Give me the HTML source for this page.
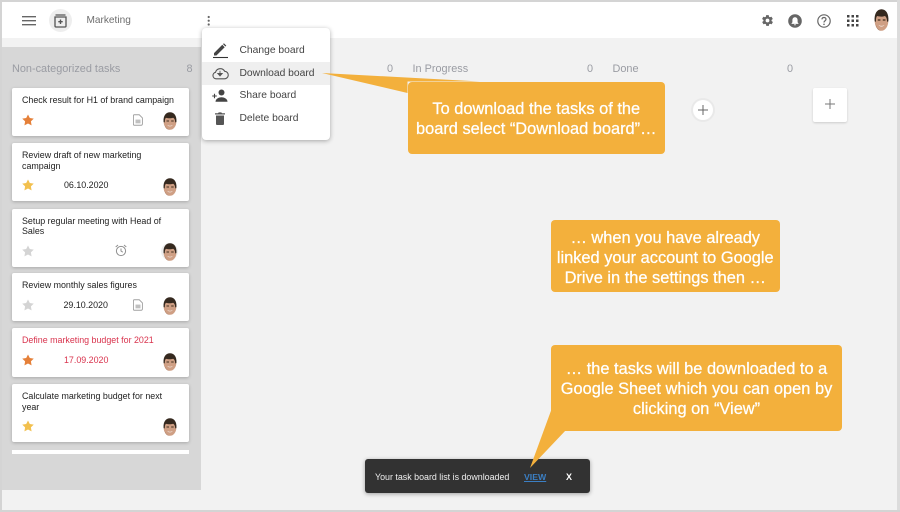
<!DOCTYPE html>
<html lang="en">
<head>
<meta charset="utf-8">
<title>Marketing board</title>
<style>
html,body{margin:0;padding:0}
body{width:900px;height:512px;position:relative;overflow:hidden;background:#f2f2f2;font-family:"Liberation Sans",sans-serif;color:#222}
.a{position:absolute;white-space:nowrap}
#frameT{left:0;top:0;width:900px;height:2px;background:#d4d4d4}
#frameL{left:0;top:0;width:2px;height:512px;background:#d4d4d4}
#frameR{left:897px;top:0;width:3px;height:512px;background:#dcdcdc}
#frameB{left:0;top:510px;width:900px;height:2px;background:#d4d4d4}
#hdr{left:2px;top:2px;width:895px;height:36px;background:#fff}
#col{left:2px;top:47px;width:199px;height:443px;background:#d7d7d7}
.card{position:absolute;left:12px;width:177px;background:#fff;border-radius:2px;box-shadow:0 1px 3px rgba(0,0,0,.22)}
.t{position:absolute;white-space:nowrap;font-size:8.9px;line-height:10.7px;color:#222}
.hd{position:absolute;white-space:nowrap;font-size:10.9px;color:#9a9ca3;line-height:12px}
.mi{position:absolute;white-space:nowrap;font-size:10.3px;color:#444;line-height:12px}
.co{position:absolute;background:#f3b03c;border-radius:4px;color:#fff;text-align:center;font-size:16.4px;line-height:20px;font-weight:400;-webkit-text-stroke:.25px #fff;white-space:nowrap}
#menu{left:202px;top:28px;width:128px;height:112px;background:#fff;border-radius:4px;box-shadow:0 1px 5px rgba(0,0,0,.32)}
#hl{left:202px;top:62px;width:128px;height:23px;background:#efefef}
#snack{left:365px;top:459px;width:225px;height:34px;background:#323232;border-radius:3px;box-shadow:0 1px 4px rgba(0,0,0,.35)}
svg{position:absolute;overflow:visible}
</style>
</head>
<body>
<svg width="0" height="0" style="position:absolute">
<defs>
<symbol id="av" viewBox="0 0 14 18" preserveAspectRatio="none">
<ellipse cx="7" cy="9.500" rx="6.400" ry="8.300" fill="#cf9f84"/>
<path d="M.6 10C0 3.500 3 .2 7 .2s7 3.300 6.400 9.800l-1.200.5C12.200 8 11.500 6.200 10 5.700 8 6.500 4.500 6.200 3 5.700 2 6.500 1.800 8 1.800 10.500z" fill="#35291f"/>
<path d="M3.500 9h2.500M8.200 9h2.500" stroke="#43301f" stroke-width="1"/>
<path d="M4.300 13c1.600 1.100 3.800 1.100 5.400 0-.5 1.700-4.900 1.700-5.400 0z" fill="#fff"/>
<path d="M1.500 12c1 4.300 3.300 5.500 5.500 5.700-2.800.3-5-1.600-5.500-5.700z" fill="#9b6d53"/>
</symbol>
<symbol id="star" viewBox="0 0 24 24">
<path d="M12 1l3.600 7L23.500 9.200l-5.700 5.600 1.400 8L12 19l-7.200 3.800 1.400-8L.5 9.200 8.400 8z"/>
</symbol>
<symbol id="doc" viewBox="0 0 12 14">
<path d="M1.500.7h6l3.800 3.800v7.300a1.500 1.500 0 0 1-1.500 1.500H1.500a1 1 0 0 1-1-1V1.700a1 1 0 0 1 1-1z" fill="none" stroke="#a0a0a0" stroke-width="1.100"/>
<path d="M3 6.500h6v4.500H3z" fill="#c0c0c0"/>
</symbol>
</defs>
</svg>

<div class="a" id="hdr"></div>
<div class="a" id="col"></div>

<!-- header left -->
<svg style="left:22px;top:16px" width="14" height="10"><path d="M0 .7h14M0 4.700h14M0 8.700h14" stroke="#666" stroke-width="1.400"/></svg>
<div class="a" style="left:49px;top:9px;width:23px;height:23px;border-radius:50%;background:#eeeeee"></div>
<svg style="left:54px;top:14px" width="13" height="14" viewBox="0 0 13 14"><path d="M1.500 1h10M1 3h11v9a1 1 0 0 1-1 1H2a1 1 0 0 1-1-1z" fill="none" stroke="#555" stroke-width="1.300"/><path d="M6.500 5.500v4.500M4.300 7.700h4.400" stroke="#555" stroke-width="1.400"/></svg>
<div class="a" style="left:86.500px;top:15px;font-size:10.100px;line-height:12px;color:#6e6e6e">Marketing</div>
<svg style="left:207px;top:16px" width="4" height="10"><circle cx="1.700" cy="1" r="1.100" fill="#666"/><circle cx="1.700" cy="4.700" r="1.100" fill="#666"/><circle cx="1.700" cy="8.500" r="1.100" fill="#666"/></svg>

<!-- header right -->
<svg style="left:761px;top:14px" width="13" height="13" viewBox="0 0 24 24"><path fill="#666" fill-rule="evenodd" d="M19.400 13c.1-.3.100-.7.100-1s0-.7-.1-1l2.100-1.600c.2-.2.200-.4.100-.6l-2-3.500c-.1-.2-.4-.3-.6-.2l-2.500 1c-.5-.4-1.100-.7-1.700-1l-.4-2.600c0-.3-.2-.5-.5-.5h-4c-.3 0-.5.200-.5.400l-.4 2.700c-.6.200-1.200.6-1.700 1l-2.500-1c-.2-.1-.5 0-.6.200l-2 3.500c-.1.200-.1.500.1.600L4.600 11c-.1.300-.1.700-.1 1s0 .7.100 1l-2.100 1.600c-.2.200-.2.400-.1.600l2 3.500c.1.200.4.300.6.200l2.500-1c.5.400 1.100.7 1.700 1l.4 2.600c0 .3.200.5.500.5h4c.3 0 .5-.2.500-.4l.4-2.700c.6-.2 1.200-.6 1.700-1l2.500 1c.2.100.5 0 .6-.2l2-3.500c.1-.2.100-.5-.1-.6zM12 15.500a3.500 3.500 0 1 1 0-7 3.500 3.500 0 0 1 0 7z"/></svg>
<svg style="left:788px;top:13.500px" width="14" height="14" viewBox="0 0 14 14"><circle cx="7" cy="7" r="6.800" fill="#666"/><path d="M7 3.300c-1.600 0-2.600 1.200-2.600 2.800v2.200L3.500 9.500v.4h7v-.4l-.9-1.200V6.100c0-1.600-1-2.800-2.600-2.800zM6 10.400h2a1 1 0 0 1-2 0z" fill="#fff"/></svg>
<svg style="left:816.500px;top:13.500px" width="14" height="14" viewBox="0 0 14 14"><circle cx="7" cy="7" r="6.200" fill="none" stroke="#666" stroke-width="1.200"/><path d="M5 5.400c0-1.200.9-1.900 2-1.900s2 .7 2 1.800c0 1.400-2 1.500-2 3.200" fill="none" stroke="#666" stroke-width="1.200"/><circle cx="7" cy="10.300" r=".8" fill="#666"/></svg>
<svg style="left:846.500px;top:14.500px" width="12" height="12"><g fill="#444"><rect x="0" y="0" width="2.500" height="2.500"/><rect x="4.500" y="0" width="2.500" height="2.500"/><rect x="9" y="0" width="2.500" height="2.500"/><rect x="0" y="4.500" width="2.500" height="2.500"/><rect x="4.500" y="4.500" width="2.500" height="2.500"/><rect x="9" y="4.500" width="2.500" height="2.500"/><rect x="0" y="9" width="2.500" height="2.500"/><rect x="4.500" y="9" width="2.500" height="2.500"/><rect x="9" y="9" width="2.500" height="2.500"/></g></svg>
<svg style="left:874px;top:9px" width="15" height="22"><use href="#av" width="15" height="22"/></svg>

<!-- column headers -->
<div class="hd" style="left:12px;top:62.500px">Non-categorized tasks</div>
<div class="hd" style="left:186.500px;top:62.500px">8</div>
<div class="hd" style="left:387px;top:62.500px">0</div>
<div class="hd" style="left:412.500px;top:62.500px">In Progress</div>
<div class="hd" style="left:587px;top:62.500px">0</div>
<div class="hd" style="left:612.500px;top:62.500px">Done</div>
<div class="hd" style="left:787px;top:62.500px">0</div>

<!-- add buttons -->
<div class="a" style="left:691px;top:98px;width:24px;height:24px;border-radius:50%;background:#e9e9e9"></div>
<div class="a" style="left:693px;top:100px;width:20px;height:20px;border-radius:50%;background:#fff"></div>
<svg style="left:698px;top:105px" width="10" height="10"><path d="M5 0v10M0 5h10" stroke="#666" stroke-width="1"/></svg>
<div class="a" style="left:813px;top:88px;width:34px;height:34px;background:#fff;border-radius:2px;box-shadow:0 1px 2px rgba(0,0,0,.16)"></div>
<svg style="left:824.500px;top:99px" width="10" height="10"><path d="M5 0v10M0 5h10" stroke="#777" stroke-width="1"/></svg>

<!-- cards -->
<div class="card" style="top:88px;height:48px"></div>
<div class="t" style="left:22px;top:95px">Check result for H1 of brand campaign</div>
<svg style="left:22px;top:113.500px;fill:#e58039" width="12" height="12"><use href="#star" width="12" height="12"/></svg>
<svg style="left:133px;top:114px" width="10" height="12"><use href="#doc" width="10" height="12"/></svg>
<svg style="left:163px;top:112px" width="14" height="18"><use href="#av" width="14" height="18"/></svg>

<div class="card" style="top:143px;height:58px"></div>
<div class="t" style="left:22px;top:150px">Review draft of new marketing<br>campaign</div>
<svg style="left:22px;top:179px;fill:#f2c04e" width="12" height="12"><use href="#star" width="12" height="12"/></svg>
<div class="t" style="left:64px;top:180px">06.10.2020</div>
<svg style="left:163px;top:178px" width="14" height="18"><use href="#av" width="14" height="18"/></svg>

<div class="card" style="top:209px;height:58px"></div>
<div class="t" style="left:22px;top:215.500px">Setup regular meeting with Head of<br>Sales</div>
<svg style="left:22px;top:244.500px;fill:#d4d4d4" width="12" height="12"><use href="#star" width="12" height="12"/></svg>
<svg style="left:115px;top:244px" width="12" height="13" viewBox="0 0 12 13"><circle cx="6" cy="7" r="4.600" fill="none" stroke="#8f8f8f" stroke-width="1"/><path d="M6 4.500V7l1.800 1.200M.7 3L3 1M11.300 3L9 1" fill="none" stroke="#8f8f8f" stroke-width="1"/></svg>
<div class="a" style="left:161px;top:243px;width:17px;height:17px;border-radius:50%;background:#eee"></div>
<svg style="left:163px;top:243px" width="14" height="18"><use href="#av" width="14" height="18"/></svg>

<div class="card" style="top:273px;height:48px"></div>
<div class="t" style="left:22px;top:280px">Review monthly sales figures</div>
<svg style="left:22px;top:298.500px;fill:#d4d4d4" width="12" height="12"><use href="#star" width="12" height="12"/></svg>
<div class="t" style="left:63.500px;top:299.500px">29.10.2020</div>
<svg style="left:133px;top:299px" width="10" height="12"><use href="#doc" width="10" height="12"/></svg>
<svg style="left:163px;top:297px" width="14" height="18"><use href="#av" width="14" height="18"/></svg>

<div class="card" style="top:328px;height:49px"></div>
<div class="t" style="left:22px;top:335px;color:#d9344e">Define marketing budget for 2021</div>
<svg style="left:22px;top:354px;fill:#e58039" width="12" height="12"><use href="#star" width="12" height="12"/></svg>
<div class="t" style="left:64px;top:355px;color:#d9344e">17.09.2020</div>
<svg style="left:163px;top:352.500px" width="14" height="18"><use href="#av" width="14" height="18"/></svg>

<div class="card" style="top:384px;height:58px"></div>
<div class="t" style="left:22px;top:391px">Calculate marketing budget for next<br>year</div>
<svg style="left:22px;top:419.500px;fill:#f2c04e" width="12" height="12"><use href="#star" width="12" height="12"/></svg>
<svg style="left:163px;top:418px" width="14" height="18"><use href="#av" width="14" height="18"/></svg>

<div class="a" style="left:12px;top:450px;width:177px;height:4px;background:#fff"></div>

<!-- menu -->
<div class="a" id="menu"></div>
<div class="a" id="hl"></div>
<svg style="left:212px;top:43px" width="16" height="16" viewBox="0 0 16 16"><path d="M1 14.500h15" stroke="#333" stroke-width="1.100"/><path d="M2 12.500v-2.400L10.300 1.800l2.400 2.400-8.300 8.300zM11 1.100l.9-.9 2.400 2.400-.9.900z" fill="#444"/></svg>
<svg style="left:212px;top:66px" width="16" height="14" viewBox="0 0 16 14"><path d="M4 12.800a3.300 3.300 0 0 1-.5-6.500A5 5 0 0 1 12.700 5.300 3.700 3.700 0 0 1 12.300 12.800z" fill="none" stroke="#555" stroke-width="1.100"/><path d="M8 4.800v4M5.800 7.500L8 10l2.200-2.500z" stroke="#555" stroke-width=".9" fill="#555"/></svg>
<svg style="left:212px;top:89px" width="16" height="14" viewBox="0 0 16 14"><circle cx="9.500" cy="3.500" r="3" fill="#444"/><path d="M3.500 12.800c0-3 3.500-4.500 6-4.500s6 1.500 6 4.500z" fill="#444"/><path d="M2.500 4.800v4.500M.2 7h4.600" stroke="#444" stroke-width="1.100"/></svg>
<svg style="left:215px;top:112px" width="10" height="13" viewBox="0 0 10 13"><path d="M1 3.500h8V12a1 1 0 0 1-1 1H2a1 1 0 0 1-1-1zM0 1.300h3L3.700.4h2.600l.7.900h3v1.200H0z" fill="#555"/></svg>
<div class="mi" style="left:239.500px;top:45px">Change board</div>
<div class="mi" style="left:239.500px;top:67.500px">Download board</div>
<div class="mi" style="left:239.500px;top:90px">Share board</div>
<div class="mi" style="left:239.500px;top:112.500px">Delete board</div>

<!-- snackbar -->
<div class="a" id="snack"></div>
<div class="a" style="left:375px;top:470.500px;font-size:8.900px;line-height:12px;color:#eee">Your task board list is downloaded</div>
<div class="a" style="left:524px;top:470.500px;font-size:8.700px;line-height:12px;color:#3b7fc4;text-decoration:underline;font-weight:bold">VIEW</div>
<div class="a" style="left:566px;top:470.500px;font-size:9px;line-height:12px;color:#fff;font-weight:bold">X</div>

<!-- callouts -->
<svg style="left:0;top:0" width="900" height="512"><path d="M322 73L480 81.500 407.500 81.500 407.500 93z" fill="#f3b03c"/><path d="M552 408L530 468 566 430z" fill="#f3b03c"/></svg>
<div class="co" style="left:407.500px;top:81.500px;width:257.500px;height:72.500px;padding-top:17.500px;box-sizing:border-box">To download the tasks of the<br>board select “Download board”…</div>
<div class="co" style="left:550.500px;top:220px;width:229.500px;height:71.500px;padding-top:7.500px;box-sizing:border-box">… when you have already<br>linked your account to Google<br>Drive in the settings then …</div>
<div class="co" style="left:551px;top:344.500px;width:291px;height:86px;padding-top:14px;box-sizing:border-box">… the tasks will be downloaded to a<br>Google Sheet which you can open by<br>clicking on “View”</div>

<div class="a" id="frameT"></div>
<div class="a" id="frameL"></div>
<div class="a" id="frameR"></div>
<div class="a" id="frameB"></div>
</body>
</html>
